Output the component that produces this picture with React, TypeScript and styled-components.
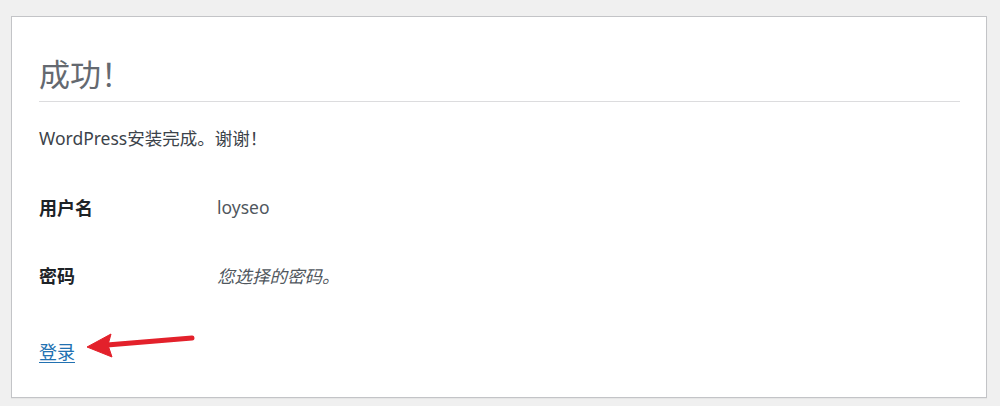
import React from "react";
import styled, { createGlobalStyle } from "styled-components";

const Global = createGlobalStyle`
  html, body { margin: 0; padding: 0; background: #f0f0f0; }
  body {
    font-family: "Noto Sans", "Noto Sans CJK SC", sans-serif;
    color: #3c434a;
  }
`;

const Page = styled.div`
  width: 1000px;
  height: 406px;
  padding: 16px 13px 8px 11px;
  box-sizing: border-box;
`;

const Card = styled.div`
  background: #fff;
  border: 1px solid #c3c4c7;
  box-shadow: 0 1px 1px rgba(0, 0, 0, 0.04);
  height: 382px;
  box-sizing: border-box;
  padding: 39px 26px 0 27px;
`;

const Heading = styled.h1`
  margin: 0;
  font-size: 31px;
  line-height: 36px;
  font-weight: 400;
  color: #646970;
  padding-bottom: 9px;
  border-bottom: 1px solid #dcdcde;
`;

const Intro = styled.p`
  margin: 25px 0 0;
  font-size: 17.5px;
  line-height: 22px;
`;

const InfoGrid = styled.div`
  display: grid;
  grid-template-columns: 178px 1fr;
  margin-top: 24px;
`;

const Cell = styled.div<{ $head?: boolean; $italic?: boolean }>`
  height: 68px;
  display: flex;
  align-items: center;
  font-size: ${(p) => (p.$head ? "18px" : "17.5px")};
  font-weight: ${(p) => (p.$head ? 700 : 400)};
  font-style: ${(p) => (p.$italic ? "italic" : "normal")};
  color: ${(p) => (p.$head ? "#1d2327" : "#50575e")};
`;

const LinkRow = styled.div`
  position: relative;
  margin-top: 32px;
  height: 22px;
`;

const LoginLink = styled.a`
  font-size: 18px;
  line-height: 22px;
  color: #2271b1;
  text-decoration: underline;
  text-underline-offset: 3px;
`;

const Arrow = styled.svg`
  position: absolute;
  left: 44px;
  top: -16px;
  overflow: visible;
`;

export default function App() {
  return (
    <>
      <Global />
      <Page>
        <Card>
          <Heading>成功！</Heading>
          <Intro>WordPress安装完成。谢谢！</Intro>
          <InfoGrid>
            <Cell $head>用户名</Cell>
            <Cell>loyseo</Cell>
            <Cell $head>密码</Cell>
            <Cell $italic>您选择的密码。</Cell>
          </InfoGrid>
          <LinkRow>
            <LoginLink href="#">登录</LoginLink>
            <Arrow width="120" height="40" viewBox="0 0 120 40">
              <line x1="109" y1="13" x2="24" y2="20" stroke="#e3212b" strokeWidth="5" strokeLinecap="round" />
              <polygon points="4,22 28,9 25,20 29,32" fill="#e3212b" strokeLinejoin="round" stroke="#e3212b" strokeWidth="1" />
            </Arrow>
          </LinkRow>
        </Card>
      </Page>
    </>
  );
}
